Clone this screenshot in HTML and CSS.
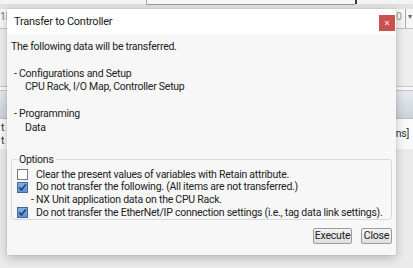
FILE: index.html
```html
<!DOCTYPE html>
<html lang="en">
<head>
<meta charset="UTF-8">
<meta name="viewport" content="width=device-width, initial-scale=1.0">
<title>Transfer to Controller</title>
<link rel="stylesheet" href="styles.css">
</head>
<body>
    <!-- application behind the dialog -->
    <div class="app">
        <div class="appTop">
            <div class="topCell"></div>
            <div class="topCell wide"></div>
            <div class="topCell dark"></div>
        </div>
        <div class="appRow">
            <span class="cellL">1E</span>
            <span class="cellR">0 <span class="drop">&#9662;</span></span>
        </div>
        <div class="appGap"></div>
        <div class="appSep"></div>
        <div class="appHead"></div>
        <div class="appRows">
            <div class="colL"><span>t</span><span>t</span></div>
            <div class="colR">ns]</div>
        </div>
    </div>

    <!-- dialog -->
    <div class="dialog">
        <div class="titleBar">
            <span class="title">Transfer to Controller</span>
            <div class="closeX">
                <svg width="6" height="6" viewBox="0 0 6 6"><path d="M1 1L5 5M5 1L1 5" stroke="#f4c9c9" stroke-width="1.1"/></svg>
            </div>
        </div>
        <div class="body">
            <p class="line">The following data will be transferred.</p>
            <p class="line blank"></p>
            <p class="line dash">- Configurations and Setup</p>
            <p class="line sub">CPU Rack, I/O Map, Controller Setup</p>
            <p class="line blank"></p>
            <p class="line dash">- Programming</p>
            <p class="line sub">Data</p>

            <fieldset class="options">
                <legend>Options</legend>
                <label class="opt"><span class="box"></span>Clear the present values of variables with Retain attribute.</label>
                <label class="opt"><span class="box on"><svg width="11" height="11" viewBox="0 0 11 11"><path d="M2.3 5.6L4.4 7.9L8.9 2.4" fill="none" stroke="#1d3659" stroke-width="1.5"/></svg></span>Do not transfer the following. (All items are not transferred.)</label>
                <div class="opt note">- NX Unit application data on the CPU Rack.</div>
                <label class="opt"><span class="box on"><svg width="11" height="11" viewBox="0 0 11 11"><path d="M2.3 5.6L4.4 7.9L8.9 2.4" fill="none" stroke="#1d3659" stroke-width="1.5"/></svg></span>Do not transfer the EtherNet/IP connection settings (i.e., tag data link settings).</label>
            </fieldset>

            <div class="buttons">
                <button class="btn exec">Execute</button>
                <button class="btn close">Close</button>
            </div>
        </div>
    </div>
</body>
</html>
```
FILE: styles.css
```css
body
{
    margin: 0;
    width: 413px;
    height: 268px;
    overflow: hidden;
    position: relative;
    background: #ebebeb;
    font-family: Roboto, "Liberation Sans", sans-serif;
    font-size: 10.5px;
    letter-spacing: -0.25px;
    color: #222;
}

/* background window */
.app
{
    display: flex;
    flex-direction: column;
}
.appTop
{
    display: flex;
    height: 9px;
    background: #e2e2e2;
}
.topCell
{
    width: 146px;
    height: 4px;
    background: #f3f3f3;
}
.topCell.wide
{
    width: 208px;
    border-left: 1px solid #b0b0b0;
    border-bottom: 1px solid #9a9a9a;
    background: #f6f6f6;
}
.topCell.dark
{
    flex: 1;
    border-left: 2px solid #3a3a3a;
}
.appRow
{
    display: flex;
    justify-content: space-between;
    height: 19px;
    line-height: 15px;
    background: #f7f7f7;
    border-bottom: 1px solid #c4c4c4;
    color: #777;
}
.cellR
{
    display: flex;
    width: 15px;
    gap: 3px;
    padding-right: 2px;
    color: #999;
}
.drop
{
    border-left: 1px solid #aaa;
    padding-left: 2px;
    font-size: 8px;
    color: #666;
}
.appGap
{
    height: 57px;
    background: #eeeeee;
}
.appSep
{
    height: 3px;
    border-top: 1px solid #c6c6c6;
    border-bottom: 1px solid #c6c6c6;
    background: #fafafa;
}
.appHead
{
    height: 27px;
    background: linear-gradient(#e6eaef, #cdd3db);
    border-bottom: 1px solid #b9c0c9;
}
.appRows
{
    display: flex;
    justify-content: space-between;
    height: 28px;
    padding: 2px 4px 0 1px;
    background: #fafafa;
    color: #333;
    line-height: 13px;
}
.colL
{
    display: flex;
    flex-direction: column;
}
.colR
{
    padding-top: 6px;
}

/* dialog */
.dialog
{
    position: absolute;
    left: 7px;
    top: 9px;
    width: 389px;
    height: 246px;
    background: #f7f7f7;
    box-shadow: 0 3px 10px rgba(0, 0, 0, 0.22), 0 0 1px rgba(0, 0, 0, 0.25);
    display: flex;
    flex-direction: column;
}
.titleBar
{
    height: 25px;
    background: #ffffff;
    display: flex;
    justify-content: space-between;
}
.title
{
    padding-left: 7px;
    line-height: 25px;
    font-size: 11px;
    color: #1a1a1a;
}
.closeX
{
    width: 16px;
    height: 16px;
    margin: 6px 1px 0 0;
    background: #c9504f;
    display: flex;
    align-items: center;
    justify-content: center;
}
.body
{
    padding: 5.5px 4px 0 4px;
}
.line
{
    margin: 0;
    height: 13.5px;
    line-height: 13.5px;
    white-space: nowrap;
}
.dash { padding-left: 3px; }
.sub { padding-left: 14px; }

.options
{
    margin: 19px 0 0 0;
    padding: 2px 5px 7px 5px;
    border: 1px solid #d6d9dc;
    border-radius: 3px;
    height: 67px;
    box-sizing: border-box;
}
.options legend
{
    padding: 0 2px;
    margin-left: 0;
    line-height: 13.5px;
}
.opt
{
    display: flex;
    align-items: center;
    height: 12.7px;
    line-height: 12.7px;
    white-space: nowrap;
}
.note
{
    padding-left: 14px;
}
.box
{
    width: 11px;
    height: 11px;
    box-sizing: border-box;
    border: 1px solid #7a7a7a;
    background: #ffffff;
    margin-right: 8px;
    flex: none;
    position: relative;
}
.box.on
{
    border-color: #3f6a9f;
    background: linear-gradient(#83aee3, #5f90cf);
}
.box svg
{
    position: absolute;
    left: -1px;
    top: -1px;
}

.buttons
{
    display: flex;
    justify-content: flex-end;
    gap: 9px;
    margin-top: 8px;
}
.btn
{
    height: 16px;
    padding: 0;
    border: 1px solid #9c9c9c;
    border-radius: 2px;
    background: linear-gradient(#f4f4f4, #dedede);
    font-family: Roboto, "Liberation Sans", sans-serif;
    font-size: 10.5px;
    letter-spacing: -0.2px;
    color: #222;
    line-height: 14px;
}
.exec { width: 39px; }
.close { width: 31px; }
```
